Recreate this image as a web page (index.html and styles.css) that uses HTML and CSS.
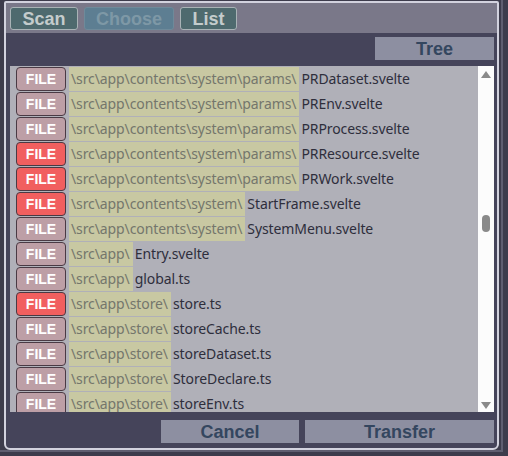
FILE: index.html
```html
<!DOCTYPE html>
<html lang="en">
<head>
	<meta charset="UTF-8">
	<meta name="viewport" content="width=device-width, initial-scale=1.0">
	<title>Choose files</title>
	<link rel="stylesheet" href="styles.css">
</head>
<body>
	<div class="frame">
		<div class="dialog">
			<div class="tabs"><!-- top mode buttons -->
				<button class="tab scan">Scan</button>
				<button class="tab choose current">Choose</button>
				<button class="tab list-tab">List</button>
			</div>

			<div class="toolbar">
				<button class="btn tree">Tree</button>
			</div>

			<div class="list">
				<div class="rows">
					<div class="row"><span class="file">FILE</span><span class="path">\src\app\contents\system\params\</span><span class="name">PRDataset.svelte</span></div>
					<div class="row"><span class="file">FILE</span><span class="path">\src\app\contents\system\params\</span><span class="name">PREnv.svelte</span></div>
					<div class="row"><span class="file">FILE</span><span class="path">\src\app\contents\system\params\</span><span class="name">PRProcess.svelte</span></div>
					<div class="row"><span class="file changed">FILE</span><span class="path">\src\app\contents\system\params\</span><span class="name">PRResource.svelte</span></div>
					<div class="row"><span class="file changed">FILE</span><span class="path">\src\app\contents\system\params\</span><span class="name">PRWork.svelte</span></div>
					<div class="row"><span class="file changed">FILE</span><span class="path">\src\app\contents\system\</span><span class="name">StartFrame.svelte</span></div>
					<div class="row"><span class="file">FILE</span><span class="path">\src\app\contents\system\</span><span class="name">SystemMenu.svelte</span></div>
					<div class="row"><span class="file">FILE</span><span class="path">\src\app\</span><span class="name">Entry.svelte</span></div>
					<div class="row"><span class="file">FILE</span><span class="path">\src\app\</span><span class="name">global.ts</span></div>
					<div class="row"><span class="file changed">FILE</span><span class="path">\src\app\store\</span><span class="name">store.ts</span></div>
					<div class="row"><span class="file">FILE</span><span class="path">\src\app\store\</span><span class="name">storeCache.ts</span></div>
					<div class="row"><span class="file">FILE</span><span class="path">\src\app\store\</span><span class="name">storeDataset.ts</span></div>
					<div class="row"><span class="file">FILE</span><span class="path">\src\app\store\</span><span class="name">StoreDeclare.ts</span></div>
					<div class="row"><span class="file">FILE</span><span class="path">\src\app\store\</span><span class="name">storeEnv.ts</span></div>
				</div>
				<div class="scrollbar"><!-- hand drawn scroll track -->
					<span class="arrow up"></span>
					<span class="thumb"></span>
					<span class="arrow down"></span>
				</div>
			</div>

			<div class="footer">
				<button class="btn cancel">Cancel</button>
				<button class="btn transfer">Transfer</button>
			</div>
		</div>
	</div>
</body>
</html>
```
FILE: styles.css
```css
body {
    margin: 0;
    padding: 0;
    background-color: #3d3c4c;
    font-family: "Liberation Sans", Arial, sans-serif;
}
.frame { /* outer window edge */
    width: 503px;
    height: 452px;
    border-right: 2px solid #5f5e70;
    border-bottom: 2px solid #5f5e70;
    box-sizing: border-box;
    padding: 1px 0 0 4px;
}
.dialog {
    width: 495px;
    height: 449px;
    box-sizing: border-box;
    border: 2px solid #d2d2de;
    border-radius: 2px 2px 6px 6px;
    background-color: #45445a;
    display: flex;
    flex-direction: column;
}
.tabs {
    height: 30px;
    box-sizing: border-box;
    background-color: #7a7889;
    display: flex;
    gap: 6px;
    padding: 4px 0 0 4px;
}
.tab {
    height: 23px;
    padding: 0;
    font-family: inherit;
    font-size: 18px;
    font-weight: bold;
    color: #c4cccc;
    background-color: #4e6a6e;
    border: 1px solid #a9b3b6;
    border-radius: 3px;
    line-height: 20px;
}
.tab.scan {
    width: 68px;
}
.tab.choose {
    width: 90px;
}
.tab.list-tab {
    width: 57px;
}
.tab.current {
    color: #7e98a6;
    background-color: #5d7e92;
    border-color: #6e8a9a;
}
.toolbar {
    display: flex;
    justify-content: flex-end;
    padding: 4px 3px 0 0;
}
.btn {
    height: 23px;
    font-family: inherit;
    font-size: 18px;
    font-weight: bold;
    color: #34465f;
    background-color: #8d8fa1;
    border: none;
    padding: 2px 0 0;
    line-height: 21px;
}
.tree {
    width: 119px;
}
.list {
    margin: 6px 3px 0 4px;
    height: 346px;
    display: flex;
    overflow: hidden;
    background-color: #b0b0b8;
}
.rows {
    flex: 1;
    padding: 1px 0 0 6px;
}
.row {
    height: 24px;
    margin-bottom: 1px;
    display: flex;
    align-items: stretch;
    font-family: "Noto Sans", sans-serif;
    font-size: 14px;
    letter-spacing: -0.1px;
    line-height: 24px;
}
.file { /* FILE badge */
    width: 48px;
    border: 1px solid #4a3a44;
    border-radius: 4px;
    background-color: #bd9fa6;
    color: #ffffff;
    font-family: "Liberation Sans", Arial, sans-serif;
    font-weight: bold;
    font-size: 14px;
    letter-spacing: 0;
    text-align: center;
    line-height: 22px;
}
.file.changed {
    background-color: #f15f5f;
}
.path {
    margin-left: 3px;
    padding: 0 3px 0 2px;
    background-color: #c8c8a2;
    color: #74766c;
}
.name {
    padding-left: 2px;
    color: #2e2e3c;
}
.scrollbar {
    width: 16px;
    background-color: #fcfcfc;
    position: relative;
}
.arrow {
    position: absolute;
    left: 3px;
    width: 0;
    height: 0;
    border-left: 5px solid transparent;
    border-right: 5px solid transparent;
}
.arrow.up {
    top: 5px;
    border-bottom: 7px solid #8a8a8a;
}
.arrow.down {
    bottom: 3px;
    border-top: 7px solid #8a8a8a;
}
.thumb {
    position: absolute;
    left: 4px;
    top: 149px;
    width: 8px;
    height: 17px;
    border-radius: 4px;
    background-color: #8a8a8a;
}
.footer {
    display: flex;
    justify-content: flex-end;
    gap: 6px;
    padding: 8px 3px 0 0;
}
.cancel {
    width: 138px;
}
.transfer {
    width: 189px;
}
```
